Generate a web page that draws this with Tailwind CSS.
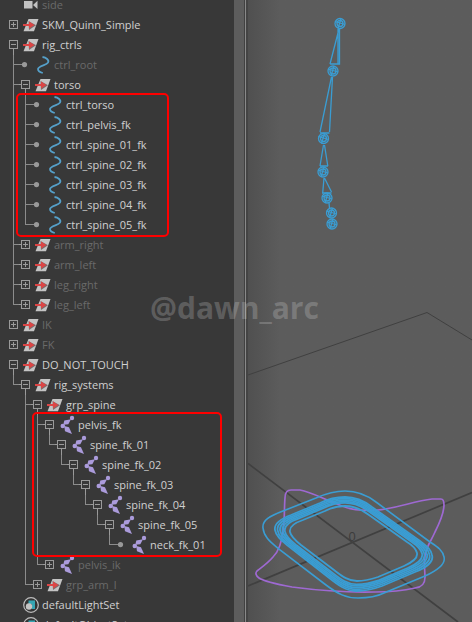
<!DOCTYPE html>
<html lang="en">
<head>
<meta charset="utf-8">
<meta name="viewport" content="width=device-width, initial-scale=1">
<title>Outliner</title>
<script src="https://cdn.jsdelivr.net/npm/@tailwindcss/browser@4"></script>
</head>
<body class="bg-[#5c5c5c]">
<svg class="hidden" aria-hidden="true">
  <symbol id="guide-line" viewBox="0 0 12 20"><path d="M6 0H7V20H6Z" fill="#8c8c8c"/></symbol>
  <symbol id="guide-tee" viewBox="0 0 12 20"><path d="M6 0H7V9H12V10H7V20H6Z" fill="#8c8c8c"/></symbol>
  <symbol id="guide-elbow" viewBox="0 0 12 20"><path d="M6 0H7V9H12V10H6Z" fill="#8c8c8c"/></symbol>
  <symbol id="mark-closed" viewBox="0 0 12 20"><g stroke="#9a9a9a" fill="none" shape-rendering="crispEdges"><path d="M2.500 5.500H10.500V13.500H2.500ZM4 9.500H9M6.500 7V12"/></g></symbol>
  <symbol id="mark-closed-child" viewBox="0 0 12 20"><g stroke="#9a9a9a" fill="none" shape-rendering="crispEdges"><path d="M0 9.500H2M2.500 5.500H10.500V13.500H2.500ZM4 9.500H9M6.500 7V12"/></g></symbol>
  <symbol id="mark-open" viewBox="0 0 12 20"><g stroke="#9a9a9a" fill="none" shape-rendering="crispEdges"><path d="M2.500 5.500H10.500V13.500H2.500ZM4 9.500H9M6.500 14V20"/></g></symbol>
  <symbol id="mark-open-child" viewBox="0 0 12 20"><g stroke="#9a9a9a" fill="none" shape-rendering="crispEdges"><path d="M0 9.500H2M2.500 5.500H10.500V13.500H2.500ZM4 9.500H9M6.500 14V20"/></g></symbol>
  <symbol id="mark-leaf" viewBox="0 0 12 20"><path d="M0 9H5V10H0Z" fill="#8c8c8c"/><circle cx="5.500" cy="9.600" r="2.600" fill="#999"/></symbol>

  <symbol id="icon-group" viewBox="0 0 20 20">
    <path d="M9.500 4H19.500L15 16.200H4.500Z" fill="#c4c4c4"/>
    <path d="M9.500 6L17 10.200L10 15Z" fill="#4a3232" opacity=".6"/>
    <path d="M4 9H11V11H4Z" fill="#dc4545"/><path d="M10 6.500L15.500 10L10 13.500Z" fill="#dc4545"/>
  </symbol>
  <symbol id="icon-curve" viewBox="0 0 20 20"><path d="M11.500 2C15 2.400 18.500 5 17 7.600C15.500 10.200 7.500 10.800 7 14C6.900 15.800 9 17.300 11.800 18" fill="none" stroke="#559fc8" stroke-width="1.800"/></symbol>
  <symbol id="icon-joint" viewBox="0 0 20 20"><g fill="#ab9bdb"><circle cx="17" cy="3" r="2.200"/><path d="M16 4.200L9.300 5.500L8.300 9.800L13.300 9.200Z"/><circle cx="7.800" cy="11" r="2.300"/><path d="M9.300 11L14 12.300L17 19L10 16.200Z"/></g></symbol>
  <symbol id="icon-camera" viewBox="0 0 20 20"><path d="M5 6H13.500V13.500H5ZM14 10L18.500 5.800V14Z" fill="#c2c2c2"/></symbol>
  <symbol id="icon-set" viewBox="0 0 20 20"><circle cx="12" cy="10" r="7.300" fill="#343434" stroke="#bdbdbd" stroke-width="1.200"/><path d="M9.500 5.500H16V14H13V9H9.500Z" fill="#35a5b3"/><circle cx="10" cy="11.500" r="3.200" fill="#c4c4c4"/></symbol>
</svg>

<div class="relative flex h-screen w-full overflow-hidden font-['Open_Sans','Noto_Sans',sans-serif]">
  <aside class="relative w-[234px] shrink-0 overflow-hidden bg-[#383838]" aria-label="Outliner">
    <ul id="tree" class="-mt-[5px]"></ul>
    <div class="absolute top-[93px] left-4 h-[144px] w-[153px] rounded-[5px] border-2 border-[#fe0000]"></div>
    <div class="absolute top-[412px] left-8 h-[145px] w-[190px] rounded-[5px] border-2 border-[#fe0000]"></div>
  </aside>
  <div class="w-[10px] shrink-0 bg-[#5d5d5d]"></div>
  <div class="w-px shrink-0 bg-[#414141]"></div>
  <div class="w-px shrink-0 bg-[#898989]"></div>
  <div class="w-[2px] shrink-0 bg-[#444444]"></div>
  <main class="min-w-0 flex-1 bg-[#5c5c5c] bg-linear-to-r from-[#505050] to-[#5c5c5c] to-[32px]">
    <svg class="h-full w-full" viewBox="248 0 224 622" role="img" aria-label="Viewport">
      <g stroke="#404040" fill="none">
        <path d="M248 375L427 312.500L472 340"/>
        <path d="M248 463.500L458 622M248 586L472 492.500" stroke-width="1.700"/>
      </g>
      <text x="352" y="541" text-anchor="middle" class="fill-[#3c3c3c] font-['Liberation_Sans',sans-serif] text-[13px]">0</text>
      <path d="M285 498C285 493 287 490 291 490H300C312 492 325 500 342 506C354 511 366 511 378 510C398 508 414 501 432 499H441C444 499 444 502 444 505C444 514 439 524 435 532C431 541 427 546 426 552C423 560 425 570 425 577C425 583 423 587 415 588C402 591 388 592 375 592C340 593 315 590 292 587C276 584 262 580 259 578C256 576 255 573 257 571C262 567 268 563 273 557C280 550 282 541 283 530C285 519 284 509 285 498Z" fill="none" stroke="#9e69d2" stroke-width="1.700"/>
      <path d="M345 491C333 491 325 494 316 498L283 511C270 516 262 520 263 528C264 538 272 543 280 550L326 585C338 594 346 598 358 598C368 598 376 597 384 593L425 576C438 570 446 564 444 557C443 550 436 546 430 542L376 502C367 495 357 491 345 491Z" fill="none" stroke="#3a9dd3" stroke-width="1.600"/>
      <g id="rings" fill="none" stroke="#3a9dd3" stroke-width="1.800"></g>
      <g id="bones" fill="none" stroke="#3a9dd3" stroke-width="1.300">
        <path d="M339 29L330 64M339.500 29V64H336.500M338 29V64M330 64H338.500"/>
        <path d="M331.500 77L320 132M332.500 77L329.500 132M320 133H329.500"/>
        <path d="M323.500 145L320 166M324.500 145L327.800 166M320 166H328"/>
        <path d="M324 178L322.700 193M324.500 178L331.500 192M322 193H331.500M329 203L329.500 208"/>
      </g>
    </svg>
  </main>
  <p class="pointer-events-none absolute top-[288px] left-[150px] text-[30px] leading-10 font-bold text-white/20">@dawn_arc</p>
</div>

<script>
const group = (name, dim, open, children = []) => ({ name, dim, icon: '#icon-group', mark: open ? 'open' : 'closed', children });
const curve = (name, dim) => ({ name, dim, icon: '#icon-curve', mark: 'leaf', children: [] });
const joint = (name, mark, children = [], dim = false) => ({ name, dim, icon: '#icon-joint', mark, children });

const scene = [
  { name: 'side', dim: true, icon: '#icon-camera', mark: '', children: [] },
  group('SKM_Quinn_Simple', false, false),
  group('rig_ctrls', false, true, [
    curve('ctrl_root', true),
    group('torso', false, true, ['ctrl_torso', 'ctrl_pelvis_fk', 'ctrl_spine_01_fk', 'ctrl_spine_02_fk', 'ctrl_spine_03_fk', 'ctrl_spine_04_fk', 'ctrl_spine_05_fk'].map(n => curve(n, false))),
    group('arm_right', true, false),
    group('arm_left', true, false),
    group('leg_right', true, false),
    group('leg_left', true, false),
  ]),
  group('IK', true, false),
  group('FK', true, false),
  group('DO_NOT_TOUCH', false, true, [
    group('rig_systems', false, true, [
      group('grp_spine', false, true, [
        joint('pelvis_fk', 'open', [joint('spine_fk_01', 'open', [joint('spine_fk_02', 'open', [joint('spine_fk_03', 'open', [joint('spine_fk_04', 'open', [joint('spine_fk_05', 'open', [joint('neck_fk_01', 'leaf')])])])])])]),
        joint('pelvis_ik', 'closed', [], true),
      ]),
      group('grp_arm_l', true, false),
    ]),
  ]),
  { name: 'defaultLightSet', dim: false, icon: '#icon-set', mark: '', children: [] },
  { name: 'defaultObjectSet', dim: false, icon: '#icon-set', mark: '', children: [] },
];

const cell = id => `<svg class="h-5 w-3 shrink-0" aria-hidden="true">${id ? `<use href="#${id}"/>` : ''}</svg>`;

// trail holds, for each ancestor level, whether further siblings follow below.
function render(nodes, trail) {
  return nodes.map((node, i) => {
    const last = i === nodes.length - 1;
    const root = trail.length === 0;
    const guides = trail.slice(1).map(more => cell(more ? 'guide-line' : '')).join('') + (root ? '' : cell(last ? 'guide-elbow' : 'guide-tee'));
    let mark = cell(node.mark === 'leaf' ? 'mark-leaf' : '');
    if (node.mark === 'open' || node.mark === 'closed') {
      mark = `<button type="button" class="h-5 w-3 shrink-0" aria-label="Toggle ${node.name}" aria-expanded="${node.mark === 'open'}">${cell('mark-' + node.mark + (root ? '' : '-child'))}</button>`;
    }
    return `<li><div class="flex h-5 items-start pl-[7px]">${guides}${mark}<svg class="mr-[3px] h-5 w-5 shrink-0" aria-hidden="true"><use href="${node.icon}"/></svg><span class="${node.dim ? 'text-[11px] leading-5 whitespace-nowrap text-[#6a6a6a]' : 'text-[11px] leading-5 whitespace-nowrap text-[#d0d0d0]'}">${node.name}</span></div>${node.children.length ? `<ul>${render(node.children, [...trail, !last])}</ul>` : ''}</li>`;
  }).join('');
}
document.getElementById('tree').innerHTML = render(scene, []);

// The spine controls form a band of nested loops between two outlines.
const outer = 'M345 497C335 497 328 499 320 503L291 515C280 519 274 524 275 530C276 536 281 540 287 545L328 577C338 585 346 591 356 591C366 591 374 589 382 586L415 572C427 567 434 562 432 555C431 549 426 546 420 541L372 507C363 500 355 497 345 497Z';
const inner = 'M345 506C337 506 331 508 325 511L303 520C294 523 289 527 290 532C291 537 296 541 301 545L334 570C342 576 348 581 357 581C365 581 372 579 378 577L404 566C413 562 418 558 417 553C416 549 412 545 407 542L369 515C361 509 354 506 345 506Z';
const innerValues = inner.match(/\d+/g).map(Number);
document.getElementById('rings').innerHTML = [0, .17, .34, .51, .66, 1].map(t => {
  let i = 0;
  return `<path d="${outer.replace(/\d+/g, v => (+v + (innerValues[i++] - v) * t).toFixed(1))}"/>`;
}).join('');

document.getElementById('bones').innerHTML += [[340, 23.5], [333, 71], [323.5, 138.5], [323, 172], [327, 198], [331.5, 213], [332, 224]].map(([x, y]) =>
  `<circle cx="${x}" cy="${y}" r="5"/><circle cx="${x}" cy="${y}" r="3"/><path d="M${x - 5} ${y - 2}L${x + 5} ${y + 1}M${x - 2} ${y + 5}L${x + 1} ${y - 5}"/>`).join('');
</script>
</body>
</html>
